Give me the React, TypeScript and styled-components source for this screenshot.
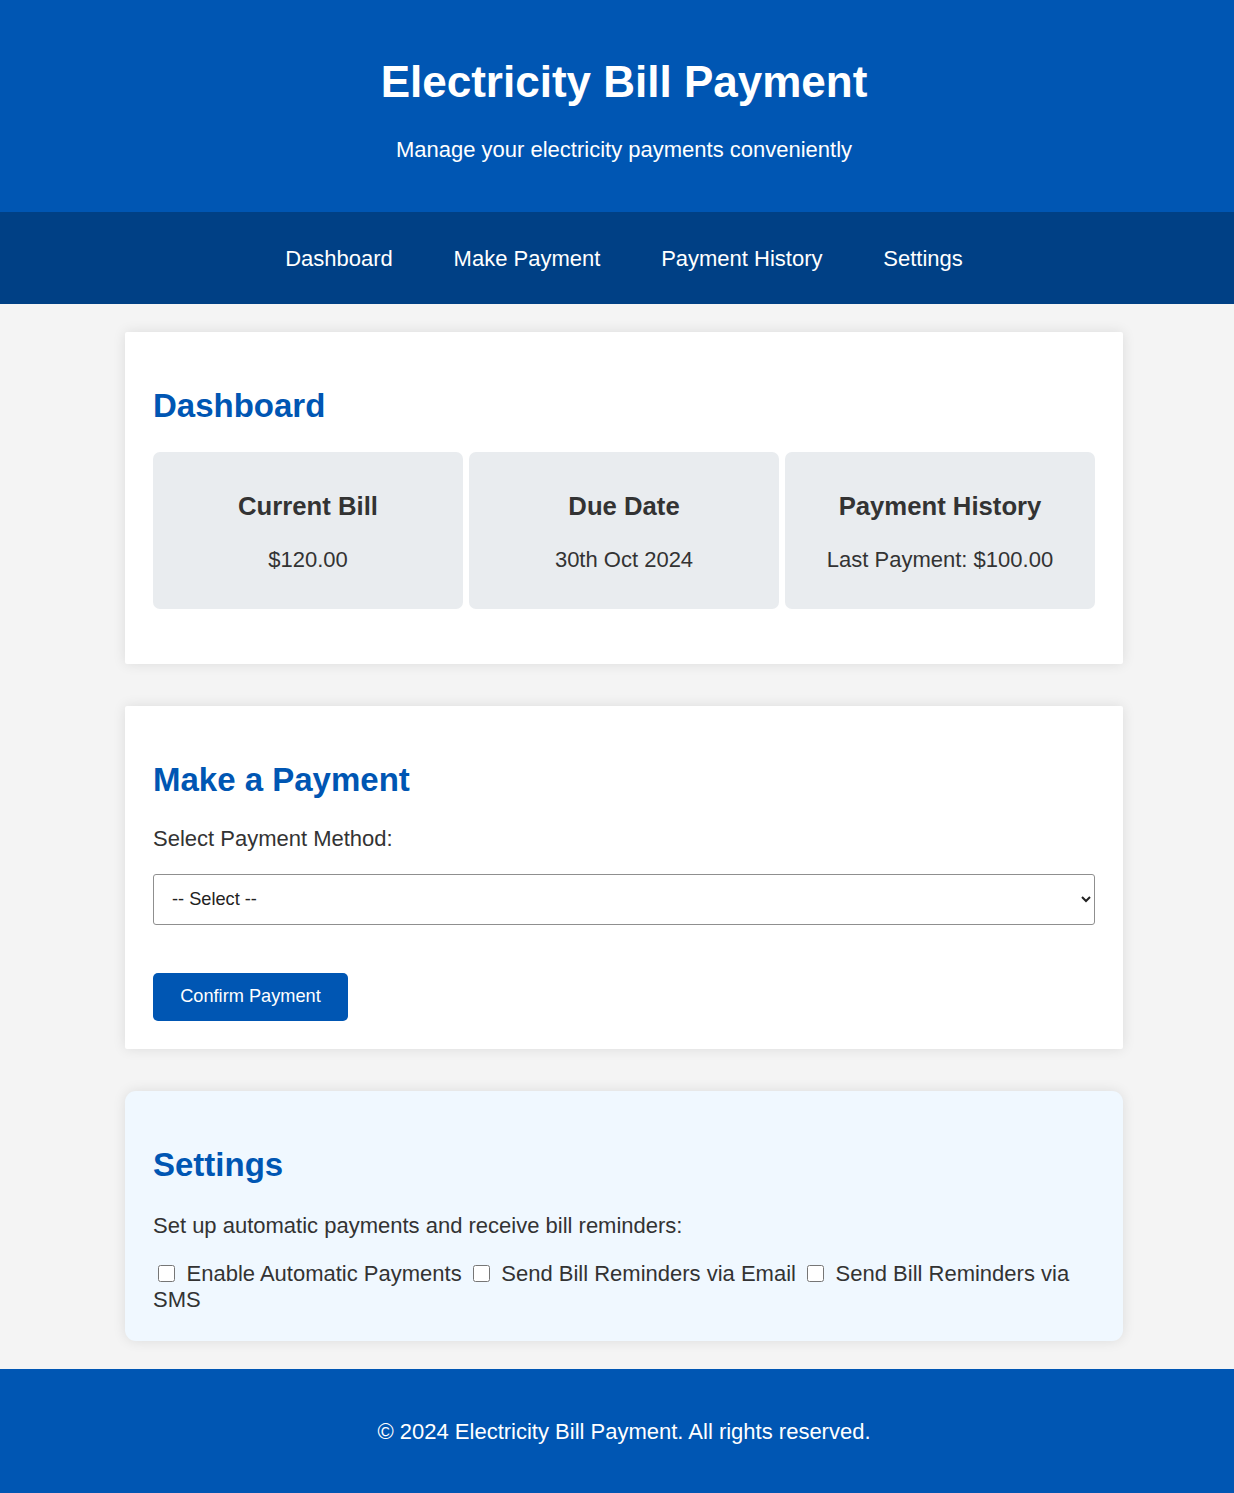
import React from "react";
import styled, { createGlobalStyle } from "styled-components";

const GlobalStyle = createGlobalStyle`
  html, body { margin: 0; padding: 0; }
  body {
    background: #f4f4f4;
    font-family: "Liberation Sans", Arial, sans-serif;
    font-size: 22px;
    color: #333;
  }
`;

const Header = styled.header`
  background: #0056b3;
  color: #fff;
  text-align: center;
  padding: 27.7px 0 27.7px 14px;
`;

const Title = styled.h1`
  font-size: 44px;
  font-weight: bold;
  margin: 29.5px 0;
`;

const Subtitle = styled.p`
  margin: 22px 0;
`;

const Nav = styled.nav`
  background: #004085;
  display: flex;
  justify-content: center;
  gap: 20px;
  padding: 19.9px 0 19.9px 14px;
`;

const NavLink = styled.a`
  color: #fff;
  text-decoration: none;
  padding: 13.6px 20.4px;
  line-height: 25px;
`;

const Main = styled.main`
  display: flex;
  flex-direction: column;
  align-items: center;
  gap: 42px;
  padding: 28px 0 28px 14px;
`;

const Section = styled.section<{ $tinted?: boolean }>`
  box-sizing: border-box;
  width: 998px;
  padding: 28px;
  background: ${(p) => (p.$tinted ? "#f0f8ff" : "#fff")};
  border-radius: ${(p) => (p.$tinted ? "11px" : "2px")};
  box-shadow: 0 0 13px rgba(0, 0, 0, 0.1);
`;

const Heading = styled.h2`
  color: #0056b3;
  font-size: 33px;
  font-weight: bold;
  margin: 27px 0;
`;

const Cards = styled.div`
  display: flex;
  justify-content: space-between;
  margin-bottom: 27px;
`;

const Card = styled.div`
  box-sizing: border-box;
  width: 310px;
  background: #e9ecef;
  border-radius: 7px;
  padding: 14px;
  text-align: center;
`;

const CardTitle = styled.h3`
  font-size: 25.7px;
  font-weight: bold;
  margin: 25.7px 0;
`;

const CardValue = styled.p`
  margin: 22px 0;
`;

const Label = styled.label`
  display: block;
  margin-bottom: 22px;
`;

const Select = styled.select`
  display: block;
  box-sizing: border-box;
  width: 100%;
  height: 51px;
  padding: 0 14px;
  font-family: "Liberation Sans", Arial, sans-serif;
  font-size: 18.2px;
  color: #222;
  background: #fff;
  border: 1px solid #8f8f8f;
  border-radius: 3px;
  margin-bottom: 48px;
`;

const Button = styled.button`
  display: block;
  background: #0056b3;
  color: #fff;
  border: none;
  border-radius: 5px;
  font-family: "Liberation Sans", Arial, sans-serif;
  font-size: 18.2px;
  line-height: 21px;
  padding: 13.6px 27.2px;
  cursor: pointer;
`;

const Text = styled.p`
  margin: 29px 0 22px;
`;

const CheckRow = styled.div`
  line-height: 26px;
`;

const CheckLabel = styled.label``;

const Check = styled.input`
  width: 17px;
  height: 17px;
  margin: 4px 5px 4px 5.4px;
  vertical-align: -1px;
`;

const Footer = styled.footer`
  background: #0056b3;
  color: #fff;
  text-align: center;
  padding: 28px 0 28px 14px;
`;

const FooterText = styled.p`
  margin: 22px 0;
`;

export default function App() {
  return (
    <>
      <GlobalStyle />
      <Header>
        <Title>Electricity Bill Payment</Title>
        <Subtitle>Manage your electricity payments conveniently</Subtitle>
      </Header>
      <Nav>
        <NavLink href="#dashboard">Dashboard</NavLink>
        <NavLink href="#payment">Make Payment</NavLink>
        <NavLink href="#history">Payment History</NavLink>
        <NavLink href="#settings">Settings</NavLink>
      </Nav>
      <Main>
        <Section id="dashboard">
          <Heading>Dashboard</Heading>
          <Cards>
            <Card>
              <CardTitle>Current Bill</CardTitle>
              <CardValue>$120.00</CardValue>
            </Card>
            <Card>
              <CardTitle>Due Date</CardTitle>
              <CardValue>30th Oct 2024</CardValue>
            </Card>
            <Card>
              <CardTitle>Payment History</CardTitle>
              <CardValue>Last Payment: $100.00</CardValue>
            </Card>
          </Cards>
        </Section>
        <Section id="payment">
          <Heading>Make a Payment</Heading>
          <Label htmlFor="method">Select Payment Method:</Label>
          <Select id="method" defaultValue="">
            <option value="">-- Select --</option>
            <option value="card">Credit Card</option>
            <option value="bank">Bank Transfer</option>
          </Select>
          <Button type="button">Confirm Payment</Button>
        </Section>
        <Section id="settings" $tinted>
          <Heading>Settings</Heading>
          <Text>Set up automatic payments and receive bill reminders:</Text>
          <CheckRow>
            <CheckLabel>
              <Check type="checkbox" /> Enable Automatic Payments
            </CheckLabel>{" "}
            <CheckLabel>
              <Check type="checkbox" /> Send Bill Reminders via Email
            </CheckLabel>{" "}
            <CheckLabel>
              <Check type="checkbox" /> Send Bill Reminders via SMS
            </CheckLabel>
          </CheckRow>
        </Section>
      </Main>
      <Footer>
        <FooterText>© 2024 Electricity Bill Payment. All rights reserved.</FooterText>
      </Footer>
    </>
  );
}
